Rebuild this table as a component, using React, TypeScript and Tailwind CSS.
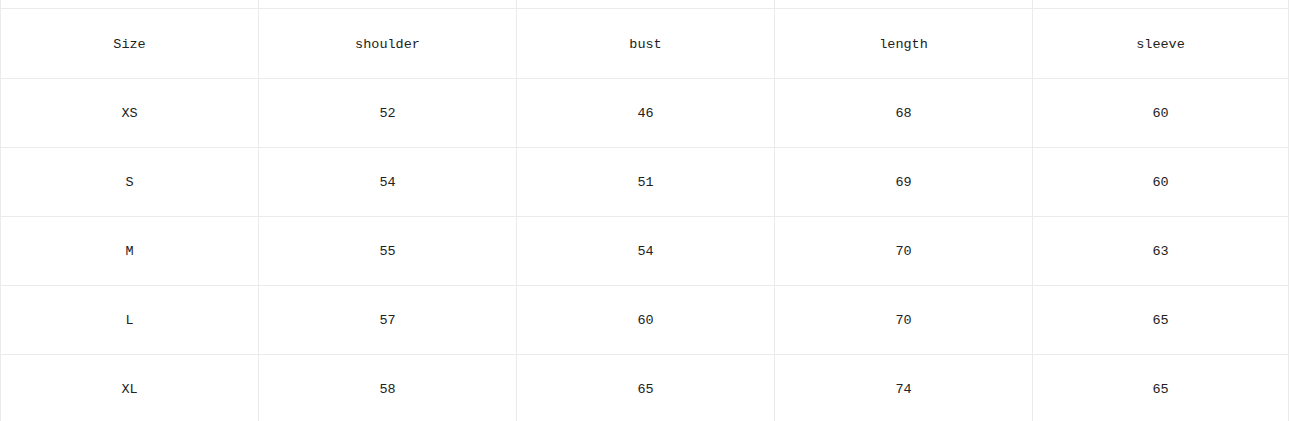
const header = ["Size", "shoulder", "bust", "length", "sleeve"];

const rows = [
  ["XS", "52", "46", "68", "60"],
  ["S", "54", "51", "69", "60"],
  ["M", "55", "54", "70", "63"],
  ["L", "57", "60", "70", "65"],
  ["XL", "58", "65", "74", "65"],
];

const heights = ["h-[70px]", "h-[69px]", "h-[69px]", "h-[69px]", "h-[69px]", "h-[69px]"];

function Row({ cells, height }: { cells: string[]; height: string }) {
  return (
    <>
      {cells.map((c, i) => (
        <div
          key={i}
          className={`${height} flex items-center justify-center pt-[3px] border-r border-b border-[#ebebeb] text-[13.5px] text-[#222]`}
        >
          {c}
        </div>
      ))}
    </>
  );
}

function App() {
  return (
    <div className="w-[1290px] h-[421px] overflow-hidden bg-white">
      <div
        className="w-[1289px] grid grid-cols-[258px_258px_258px_258px_256px] border-l border-[#ebebeb]"
        style={{ fontFamily: '"Liberation Mono", "DejaVu Sans Mono", monospace' }}
      >
        <div className="col-span-5 grid grid-cols-[258px_258px_258px_258px_256px]">
          {[0, 1, 2, 3, 4].map((i) => (
            <div key={i} className="h-[9px] border-r border-b border-[#ebebeb]" />
          ))}
        </div>
        <Row cells={header} height={heights[0]} />
        {rows.map((r, i) => (
          <Row key={i} cells={r} height={heights[i + 1]} />
        ))}
      </div>
    </div>
  );
}

export default App;
